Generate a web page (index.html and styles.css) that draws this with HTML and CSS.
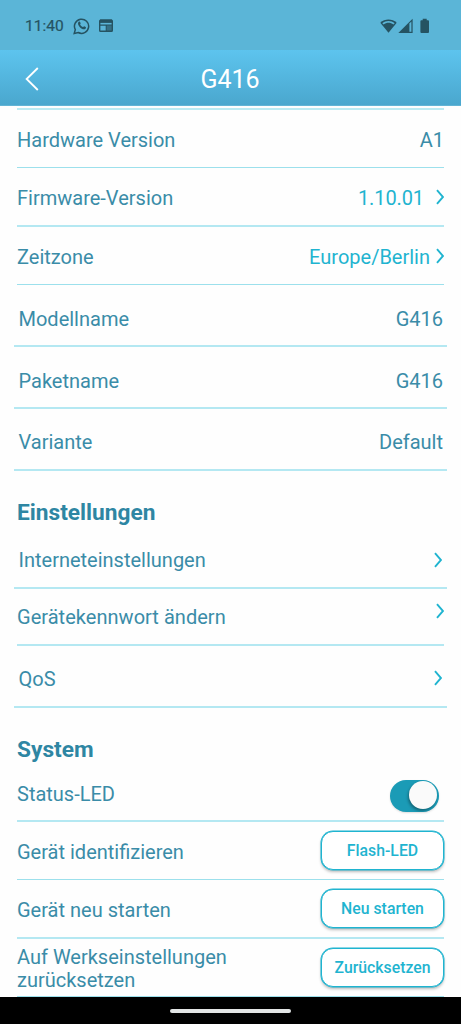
FILE: index.html
```
<!DOCTYPE html>
<html lang="de">
<head>
<meta charset="utf-8">
<title>G416</title>
<link rel="stylesheet" href="styles.css">
</head>
<body>
<div class="screen">
  <div class="status">
    <span class="time">11:40</span>
    <svg class="whatsapp" width="18" height="18" viewBox="0 0 18 18"><path d="M1.2 16.5L2.3 12.6A7.1 7.1 0 1 1 5.2 15.5Z" fill="none" stroke="#255362" stroke-width="1.5"/><path d="M5.9 4.6c.6-.3 1-.1 1.200.4l.5 1.200c.2.5-.5 1-.5 1.300.5 1.100 1.500 2 2.700 2.500.5.1.9-1 1.400-.8l1.500.8c.5.300.2 1.200-.2 1.700-1.300 1.300-3.900.300-5.400-1.200C5.600 9 4 6.300 5.900 4.600z" fill="#255362"/></svg>
    <svg class="news" width="14" height="13" viewBox="0 0 14 13"><rect x=".7" y="1.200" width="12.600" height="11.100" rx=".8" fill="none" stroke="#255362" stroke-width="1.400"/><path d="M1 2.900H13" stroke="#255362" stroke-width="2"/><path d="M1.500 .5H13" stroke="#255362" stroke-dasharray="1 1"/><path d="M1 6.200H13M7.300 6V12" stroke="#255362" stroke-width="1.200"/><path d="M8 6.500h5V12H8z" fill="#255362" opacity=".7"/></svg>
    <span class="spacer"></span>
    <svg class="signals" width="50" height="16" viewBox="0 0 50 16"><path d="M.3 4.800C4.700.400 12.200.400 16.700 4.800L8.500 14.800z" fill="#255362"/><path d="M2.300 5.300C6 2.200 11 2.200 14.700 5.300L13.400 6.600C10.500 4.100 6.500 4.100 3.600 6.600z" fill="#5bb5d7"/><path d="M18.300 15L32.600.800V15z" fill="#255362"/><path d="M29.400 5.500L31.400 3.500V13.800H29.400z" fill="#5bb5d7"/><path d="M42.700.800h4v1.400h1.300q1 0 1 1V14q0 1-1 1h-6.600q-1 0-1-1V3.200q0-1 1-1h1.300z" fill="#255362"/></svg>
  </div>
  <header class="header">
    <svg class="back" width="14" height="24" viewBox="0 0 14 24"><path d="M12.800 1L1.600 12L12.800 23" fill="none" stroke="#fff" stroke-width="1.800"/></svg>
    <h1>G416</h1>
  </header>
  <main class="content">
    <section>
      <div class="lead"></div>
      <div class="row r-hardware thin"><span>Hardware Version</span><span class="value">A1</span></div>
      <div class="row r-firmware"><span>Firmware-Version</span><span class="value link version">1.10.01</span><svg class="chevron" width="8" height="16" viewBox="0 0 8 16"><path d="M1 1.200L7 8L1 14.800"/></svg></div>
      <div class="row r-zone thin"><span>Zeitzone</span><span class="value link">Europe/Berlin</span><svg class="chevron" width="8" height="16" viewBox="0 0 8 16"><path d="M1 1.200L7 8L1 14.800"/></svg></div>
      <div class="row wide r-model"><span>Modellname</span><span class="value">G416</span></div>
      <div class="row wide"><span>Paketname</span><span class="value">G416</span></div>
      <div class="row wide r-variant"><span>Variante</span><span class="value">Default</span></div>
    </section>
    <section>
      <h2>Einstellungen</h2>
      <div class="row wide r-internet"><span>Interneteinstellungen</span><svg class="chevron" width="8" height="16" viewBox="0 0 8 16"><path d="M1 1.200L7 8L1 14.800"/></svg></div>
      <div class="row r-password"><span>Gerätekennwort ändern</span><svg class="chevron raised" width="8" height="16" viewBox="0 0 8 16"><path d="M1 1.200L7 8L1 14.800"/></svg></div>
      <div class="row wide r-qos"><span>QoS</span><svg class="chevron" width="8" height="16" viewBox="0 0 8 16"><path d="M1 1.200L7 8L1 14.800"/></svg></div>
    </section>
    <section>
      <h2 class="system">System</h2>
      <div class="row r-led"><span>Status-LED</span><span class="switch"><i></i></span></div>
      <div class="row r-identify thin"><span>Gerät identifizieren</span><button>Flash-LED</button></div>
      <div class="row r-restart"><span>Gerät neu starten</span><button>Neu starten</button></div>
      <div class="row r-reset thin"><span class="multi">Auf Werkseinstellungen<br>zurücksetzen</span><button>Zurücksetzen</button></div>
    </section>
  </main>
  <footer class="navbar"><div class="handle"></div></footer>
</div>
</body>
</html>
```
FILE: styles.css
```
* { box-sizing: border-box; }
body { margin: 0; background: #fefefe; font-family: Roboto, sans-serif; }
.screen { width: 461px; height: 1024px; display: flex; flex-direction: column; overflow: hidden; }
.status { height: 50px; flex: none; background: #5bb5d7; display: flex; align-items: center; padding: 1px 31px 0 25px; color: #255362; }
.time { width: 48px; font-size: 15.5px; font-weight: 400; -webkit-text-stroke: .2px #255362; }
.news { margin-left: 8px; }
.spacer { flex: 1; }
.header { height: 56px; flex: none; display: flex; align-items: center; padding: 2px 25px 0; background: linear-gradient(#5dc4ee, #4aa7ce); color: #fff; border-bottom: 1px solid #62b4d5; }
h1 { flex: 1; margin: 1px 15px 0 0; text-align: center; font-size: 25px; font-weight: 400; }
.content { height: 891px; flex: none; padding: 0 17px; color: #3a8ca8; }
.lead { height: 4px; border-bottom: 2px solid #bbebf3; }
.row { height: 62px; display: flex; align-items: center; border-bottom: 2px solid #b4e8f2; font-size: 20px; line-height: 24px; white-space: nowrap; padding-top: 2px; }
.thin { border-bottom: 1px solid #9ce0ec; }
.wide { margin: 0 -3px; padding: 7px 4px 0 4.5px; }
.r-variant, .r-qos { padding-top: 6px; }
.value { margin-left: auto; }
.link { color: #1fb4d0; }
.version { margin-right: 6px; letter-spacing: -.1px; }
.chevron { margin-left: auto; flex: none; fill: none; stroke: #1fb4d0; stroke-width: 1.900; }
.link + .chevron { margin-left: 6px; margin-bottom: 1px; }
.raised { margin-bottom: 13px; }
.wide .chevron { margin-right: 1px; margin-bottom: 2px; }
.r-hardware { height: 58px; }
.r-firmware { height: 59px; }
.r-zone { height: 58px; }
h2 { height: 63px; margin: 0; padding-top: 28px; font-size: 22.7px; line-height: 28px; font-weight: 700; color: #2e86a3; }
.r-internet { height: 55px; padding-top: 0; }
.r-internet span { margin-top: -1px; }
.r-password { height: 57px; padding-top: 1px; letter-spacing: .03px; }
h2.system { height: 60px; padding-top: 28px; }
.r-led { height: 54px; padding-top: 0; }
.switch { width: 49px; height: 32px; margin: 3px 5px 0 auto; padding: 1px 2px; border-radius: 16px; background: #1b9bb6; display: flex; justify-content: flex-end; overflow: hidden; box-shadow: 0 1px 2px #0002; }
.switch i { width: 28px; height: 28px; border-radius: 50%; background: #fafafa; box-shadow: -1px 2px 3px #0005; }
button { width: 123px; height: 39px; margin: -3px 0 0 auto; padding: 0; border: 1px solid #1fb4d0; border-radius: 12px; background: #fff; color: #1fb4d0; font: 500 15.8px Roboto, sans-serif; box-shadow: 0 0 0 .5px #1fb4d0, 0 2px 3px #0004; flex: none; }
.r-identify { height: 58px; }
.r-restart { height: 59px; }
.r-reset { height: 58px; }
.multi { line-height: 23px; }
.navbar { height: 27px; flex: none; background: #000; padding-top: 12px; }
.handle { width: 121px; height: 4px; margin: 0 auto; border-radius: 2px; background: #e2e5e5; }
```
